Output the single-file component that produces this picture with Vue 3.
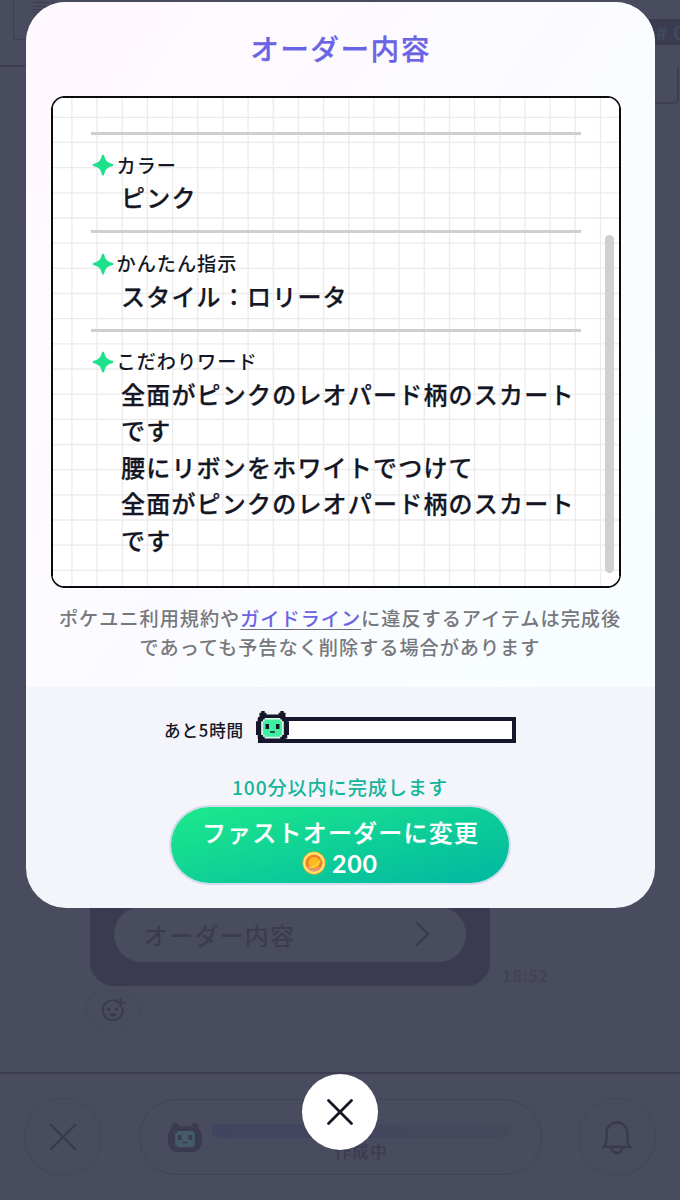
<template>
  <div class="screen">
    <div class="room" aria-hidden="true">
      <div class="room-top">
        <div class="room-menu"><i v-for="n in 4" :key="n"></i></div>
        <div class="room-side">
          <span class="room-tag"># 0</span>
          <div class="room-box"></div>
        </div>
      </div>

      <div class="chat">
        <div class="chat-row">
          <div class="bubble">
            <div class="bubble-btn">
              <span>オーダー内容</span>
              <svg width="16" height="28" viewBox="0 0 16 28"><path d="M2 3l11 11L2 25" /></svg>
            </div>
          </div>
          <span class="chat-time">18:52</span>
        </div>
        <div class="reaction">
          <svg width="26" height="26" viewBox="0 0 26 26">
            <path d="M17 4.2A10 10 0 1 0 22.500 11M20.500 1.500v8M16.500 5.500h8" />
            <circle class="dot" cx="9" cy="12" r="1.600" />
            <circle class="dot" cx="16.500" cy="12" r="1.600" />
            <path class="dot" d="M9 16.500h8q-1.500 3-4 3t-4-3z" />
          </svg>
        </div>
      </div>

      <div class="dock">
        <div class="dock-circle">
          <svg width="30" height="30" viewBox="0 0 30 30"><path d="M3 3l24 24M27 3L3 27" /></svg>
        </div>
        <div class="dock-pill">
          <svg class="dock-face" width="34" height="29" viewBox="0 0 19 18" preserveAspectRatio="none">
            <path class="face-line" :d="face.outline" />
            <path class="face-skin" :d="face.skin" />
            <path class="face-line" :d="face.eyes" />
          </svg>
          <div class="dock-status">
            <div class="dock-bar"></div>
            <span>作成中</span>
          </div>
        </div>
        <div class="dock-circle">
          <svg width="30" height="36" viewBox="0 0 30 36">
            <path d="M1.500 28h27c-2.500-2-3-5-3-8v-6a10.500 10.500 0 0 0-21 0v6c0 3-.5 6-3 8zM9.500 28.500a5.500 5.500 0 0 0 11 0" />
          </svg>
        </div>
      </div>
    </div>

    <div class="overlay">
      <section class="modal">
        <div class="modal-body">
          <h2 class="modal-title">オーダー内容</h2>

          <div class="sheet">
            <svg class="sheet-frame" width="570" height="492" viewBox="0 0 570 492">
              <rect class="sheet-bg" x="1" y="1" width="568" height="490" rx="12" />
              <line v-for="x in gridX" :key="'x' + x" :x1="x" :x2="x" y1="2" y2="490" />
              <line v-for="y in gridY" :key="'y' + y" x1="2" x2="568" :y1="y" :y2="y" />
              <rect class="sheet-corner" x=".8" y=".8" width="568.400" height="490.400" rx="13" />
              <path class="sheet-edge" d="M12 1h546M12 491h546M1 12v468M569 12v468" />
            </svg>
            <div class="items">
              <div v-for="item in items" :key="item.label" class="item">
                <div class="item-label">
                  <svg width="22" height="22" viewBox="0 0 22 22">
                    <path d="M11 .5q1 0 1.300 1.500q1.200 6.500 7.700 7.700q1.500.3 1.500 1.300t-1.500 1.300q-6.500 1.200-7.700 7.700q-.3 1.500-1.300 1.500t-1.300-1.500q-1.200-6.500-7.700-7.700q-1.500-.3-1.500-1.300t1.500-1.300q6.500-1.200 7.700-7.700q.3-1.500 1.300-1.500z" />
                  </svg>
                  <span>{{ item.label }}</span>
                </div>
                <p v-for="(line, i) in item.lines" :key="i" class="item-value">{{ line }}</p>
              </div>
            </div>
            <div class="scrollbar"></div>
          </div>

          <p class="note">
            ポケユニ利用規約や<a class="note-link">ガイドライン</a>に違反するアイテムは完成後<br />であっても予告なく削除する場合があります
          </p>
        </div>

        <div class="modal-foot">
          <div class="progress">
            <span class="progress-label">あと5時間</span>
            <div class="progress-track">
              <svg class="progress-face" width="33" height="31" viewBox="0 0 19 18" preserveAspectRatio="none">
                <path class="face-line" :d="face.outline" />
                <path class="face-glow" :d="face.glow" />
                <path class="face-skin" :d="face.skin" />
                <path class="face-line" :d="face.eyes" />
              </svg>
            </div>
          </div>
          <p class="fast-note">100分以内に完成します</p>
          <button class="fast-btn">
            <span class="fast-text">ファストオーダーに変更</span>
            <span class="fast-price">
              <svg width="24" height="24" viewBox="0 0 24 24">
                <circle cx="12" cy="12" r="11.500" fill="#f9a825" />
                <circle cx="12" cy="12" r="10.700" fill="#ffe873" />
                <circle cx="12" cy="12" r="8.600" fill="#ef7f2d" />
                <path d="M4 15a8.600 8.600 0 0 0 16-0q-7 5-16 0z" fill="#e39a78" />
                <circle cx="12" cy="11.500" r="5.600" fill="#ffb81f" />
                <path d="M5 15.500q8 1.500 14-8q-1 6-6 8.500q-4 2-8-.5z" fill="#ffd23c" />
              </svg>
              <b>200</b>
            </span>
          </button>
        </div>
      </section>

      <button class="close" aria-label="閉じる">
        <svg width="30" height="30" viewBox="0 0 30 30"><path d="M3.500 3.500l23 23M26.500 3.500l-23 23" /></svg>
      </button>
    </div>
  </div>
</template>

<script setup>
const items = [
  { label: 'カラー', lines: ['ピンク'] },
  { label: 'かんたん指示', lines: ['スタイル：ロリータ'] },
  {
    label: 'こだわりワード',
    lines: [
      '全面がピンクのレオパード柄のスカート',
      'です',
      '腰にリボンをホワイトでつけて',
      '全面がピンクのレオパード柄のスカート',
      'です',
    ],
  },
]

const CELL = 25.17
const gridX = Array.from({ length: 22 }, (_, i) => 20.9 + i * CELL)
const gridY = Array.from({ length: 19 }, (_, i) => 21.3 + i * CELL)

// 19 x 18 pixel mascot
const face = {
  outline: 'M3 0h2v1h1v1h7v-1h1v-1h2v1h1v3h1v2h1v8h-1v2h-1v1h-1v1h-13v-1h-1v-1h-1v-2h-1v-8h1v-2h1v-3h1z',
  glow: 'M5 4h9v1h1v1h1v8h-1v1h-1v1h-9v-1h-1v-1h-1v-8h1v-1h1z',
  skin: 'M5 5h9v1h1v8h-1v1h-9v-1h-1v-8h1z',
  eyes: 'M5.500 7.500h2v3h-2zM11.500 7.500h2v3h-2zM8.200 11.700h2.600v.9h-2.600z',
}
</script>

<style>
body { margin: 0; background: #494b5e; }
</style>

<style scoped>
.screen { position: relative; width: 680px; height: 1200px; overflow: hidden; font-family: "Noto Sans CJK JP", sans-serif; font-weight: 500; color: #141624; }
.screen * { letter-spacing: .05em; }
p, h2 { margin: 0; }
button { border: 0; padding: 0; font: inherit; }
svg { display: block; flex-shrink: 0; }

/* dimmed room behind the modal */
.room { height: 100%; display: flex; flex-direction: column; justify-content: space-between; color: #3b3c50; background: #494b5e; }
.room svg path { fill: none; stroke: #393a4e; stroke-width: 2.300; stroke-linecap: round; }
.room-top { display: flex; justify-content: space-between; height: 105px; }
.room-menu { box-sizing: border-box; width: 60px; height: 67px; padding-left: 13px; border-bottom: 2px solid #3d3e52; }
.room-menu::before { content: ''; display: block; box-sizing: border-box; width: 40px; height: 40px; border: 1px solid #3d3e52; border-top: 0; }
.room-menu i { display: block; width: 16px; height: 1px; margin: -38px 0 40px 20px; background: #3d3e52; }
.room-menu i + i { margin-top: -37px; margin-bottom: 39px; }
.room-side { display: flex; flex-direction: column; align-items: flex-end; width: 60px; }
.room-tag { box-sizing: border-box; width: 40px; height: 26px; margin-top: 19px; padding-left: 16px; background: #3b3c50; color: #3e4b60; font-size: 19px; font-weight: 700; line-height: 25px; white-space: nowrap; overflow: hidden; }
.room-box { box-sizing: border-box; width: 40px; height: 37px; margin: 22px 1px 0 0; border: 2px solid #3d3e52; border-top: 0; border-left: 0; border-radius: 0 0 5px 0; }
.chat { margin-top: auto; height: 192px; padding-left: 90px; }
.chat-row { display: flex; align-items: flex-end; gap: 12px; height: 106px; }
.bubble { box-sizing: border-box; width: 400px; height: 106px; padding: 27px 24px 24px; border-radius: 0 0 24px 24px; background: #3a3b50; }
.bubble-btn { box-sizing: border-box; display: flex; align-items: center; justify-content: space-between; height: 55px; padding: 0 35px 1px 30px; border-radius: 28px; background: #494b5e; font-size: 24px; }
.chat-time { font-size: 16.500px; line-height: 22px; color: #414256; }
.reaction { display: flex; align-items: center; justify-content: center; width: 54px; height: 39px; margin: 4px 0 0 -4px; border-radius: 20px; box-shadow: inset 0 0 0 1px #46485b; }
.reaction svg path { stroke-width: 1.800; }
.reaction svg .dot { fill: #393a4e; stroke: none; }
.dock { box-sizing: border-box; display: flex; align-items: center; justify-content: space-between; height: 128px; padding: 0 24px; border-top: 2px solid #3b3c50; }
.dock-circle { display: flex; align-items: center; justify-content: center; width: 78px; height: 78px; border-radius: 50%; box-shadow: inset 0 0 0 1px #45475a; }
.dock-pill { box-sizing: border-box; display: flex; align-items: center; gap: 10px; width: 403px; height: 76px; padding: 0 30px 0 28px; border: 1px solid #414357; border-radius: 38px; }
.dock .dock-face path { stroke: none; }
.dock .dock-face .face-line { fill: #3a3b50; }
.dock .dock-face .face-skin { fill: #435b6b; }
.dock-status { flex: 1; display: flex; flex-direction: column; align-items: center; padding-top: 14px; font-size: 17px; line-height: 26px; }
.dock-bar { width: 100%; height: 14px; border-radius: 5px; background: linear-gradient(90deg, #434560, #46485c); }

.overlay { position: absolute; inset: 0; display: flex; flex-direction: column; align-items: center; padding-top: 2px; }
.modal { width: 629px; height: 906px; border-radius: 40px; overflow: hidden; display: flex; flex-direction: column; flex-shrink: 0; background: #f4f5fb; }
.modal-body { height: 685px; box-sizing: border-box; padding: 22px 25px 0; background: linear-gradient(125deg, #fff9ff 12%, #fbfbff 50%, #f8feff 90%); }
.modal-title { padding-left: 1px; font-size: 28.700px; font-weight: 500; line-height: 48px; text-align: center; color: #6a64e4; -webkit-text-stroke: .25px; }

.sheet { position: relative; width: 570px; height: 492px; margin-top: 24px; }
.sheet-frame { position: absolute; inset: 0; }
.sheet-frame line { stroke: #ebebec; stroke-width: 1.300; }
.sheet-bg { fill: #fff; }
.sheet-corner, .sheet-edge { fill: none; stroke: #0c0c10; }
.sheet-corner { stroke-width: 1.500; }
.sheet-edge { stroke-width: 2; }
.items { position: relative; padding: 36px 40px 0; }
.item { height: 79.800px; padding-top: 15.500px; border-top: 3px solid #cfcfd0; }
.item-label { display: flex; align-items: center; gap: 3px; height: 28.800px; font-size: 19.200px; }
.item-label svg { margin: 1px 0 0 1px; }
.item-label path { fill: #1fe08c; }
.item-value { padding-left: 30.500px; font-size: 24px; line-height: 36.400px; white-space: nowrap; -webkit-text-stroke: .25px; }
.scrollbar { position: absolute; right: 7px; top: 139px; width: 9px; height: 338px; border-radius: 5px; background: #d0d0d3; }

.note { margin: 16px -10px 0; font-size: 19.200px; line-height: 29px; text-align: center; color: #77787d; }
.note-link { color: #6a64e4; text-decoration: underline 1px #6f6f78; text-underline-offset: 3px; text-decoration-skip-ink: none; }

.modal-foot { display: flex; flex-direction: column; align-items: center; }
.progress { display: flex; align-items: center; gap: 14px; margin-top: 30px; }
.progress-label { font-size: 16.600px; line-height: 26px; }
.progress-track { position: relative; box-sizing: border-box; width: 258px; height: 26px; border: 4px solid #15162a; background: #fff; }
.progress-face { position: absolute; left: -6px; top: -10px; }
.progress-face .face-line { fill: #15162a; }
.progress-face .face-glow { fill: #dffbf0; }
.progress-face .face-skin { fill: #3ff0a0; }
.fast-note { margin-top: 30px; font-size: 19.200px; line-height: 29px; letter-spacing: .045em; color: #14b69a; }
.fast-btn { box-sizing: border-box; display: flex; flex-direction: column; align-items: center; width: 338px; height: 76px; margin-top: 5px; padding-top: 7px; border-radius: 38px; background: linear-gradient(165deg, #1ce78c 5%, #02b9a1 95%); box-shadow: 0 0 0 2px #d3dcee; color: #fff; }
.fast-text { padding-left: 1px; font-size: 24px; line-height: 36px; -webkit-text-stroke: .2px; }
.fast-price { display: flex; align-items: center; gap: 6px; height: 26px; }
.fast-price b { font-family: Lato, sans-serif; font-size: 25px; line-height: 26px; letter-spacing: .03em; }

.close { display: flex; align-items: center; justify-content: center; width: 76px; height: 76px; margin-top: 166px; border-radius: 50%; background: #fff; flex-shrink: 0; }
.close path { fill: none; stroke: #141624; stroke-width: 2.800; stroke-linecap: round; }
</style>
